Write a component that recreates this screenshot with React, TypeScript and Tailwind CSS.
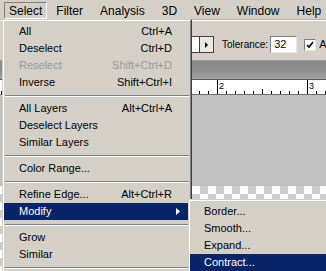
import type { ReactNode } from "react";

type Entry =
	| {
			label: string;
			shortcut?: string;
			disabled?: boolean;
			active?: boolean;
			submenu?: boolean;
	  }
	| "sep";

const selectMenu: Entry[] = [
	{ label: "All", shortcut: "Ctrl+A" },
	{ label: "Deselect", shortcut: "Ctrl+D" },
	{ label: "Reselect", shortcut: "Shift+Ctrl+D", disabled: true },
	{ label: "Inverse", shortcut: "Shift+Ctrl+I" },
	"sep",
	{ label: "All Layers", shortcut: "Alt+Ctrl+A" },
	{ label: "Deselect Layers" },
	{ label: "Similar Layers" },
	"sep",
	{ label: "Color Range..." },
	"sep",
	{ label: "Refine Edge...", shortcut: "Alt+Ctrl+R" },
	{ label: "Modify", active: true, submenu: true },
	"sep",
	{ label: "Grow" },
	{ label: "Similar" },
	"sep",
];

const modifyMenu: Entry[] = [
	{ label: "Border..." },
	{ label: "Smooth..." },
	{ label: "Expand..." },
	{ label: "Contract...", active: true },
];

const menuBar = ["Select", "Filter", "Analysis", "3D", "View", "Window", "Help"];

function MenuFrame({ className, children }: { className: string; children: ReactNode }) {
	// classic windows 3d frame: light outer/white inner top-left, dark outer/gray inner bottom-right
	return (
		<div
			className={`absolute border border-t-[#d4d0c8] border-l-[#d4d0c8] border-r-[#404040] border-b-[#404040] bg-[#d4d0c8] ${className}`}
		>
			<div className="border border-t-white border-l-white border-r-[#808080] border-b-[#808080] pt-[2px]">
				{children}
			</div>
		</div>
	);
}

function MenuRow({ entry, padLeft }: { entry: Entry; padLeft: string }) {
	if (entry === "sep") {
		return (
			<div className="h-[9px] flex flex-col justify-center px-[1px]">
				<div className="h-px bg-[#808080]" />
				<div className="h-px bg-white" />
			</div>
		);
	}
	const color = entry.active
		? "bg-[#0a246a] text-white"
		: entry.disabled
			? "text-[#9a9894]"
			: "text-black";
	return (
		<div className={`h-[17px] flex items-center ${padLeft} pr-[18px] ${color}`}>
			<span className="flex-1 whitespace-nowrap">{entry.label}</span>
			{entry.shortcut && <span className="whitespace-nowrap">{entry.shortcut}</span>}
			{entry.submenu && (
				<svg width="4" height="7" viewBox="0 0 4 7" className="mr-[-8px]">
					<polygon points="0,0 4,3.5 0,7" fill="currentColor" />
				</svg>
			)}
		</div>
	);
}

function Ruler() {
	const ticks = [];
	for (let k = -24; k <= 12; k++) {
		const x = 217 + k * 9;
		if (k % 10 === 0) continue;
		const h = k % 5 === 0 ? 5 : 3;
		ticks.push(<line key={k} x1={x + 0.5} x2={x + 0.5} y1={14 - h} y2={14} stroke="#000" />);
	}
	return (
		<div className="h-[15px] bg-white border-b border-[#6e6e6e]">
			<svg width="326" height="14" className="block">
				{ticks}
				<line x1="217.5" x2="217.5" y1="0" y2="14" stroke="#000" />
				<line x1="307.5" x2="307.5" y1="0" y2="14" stroke="#000" />
				<text x="219" y="9" fontSize="9" fontFamily="Liberation Sans, sans-serif">
					2
				</text>
				<text x="309" y="9" fontSize="9" fontFamily="Liberation Sans, sans-serif">
					3
				</text>
			</svg>
		</div>
	);
}

export default function App() {
	return (
		<div className="relative w-[326px] h-[271px] overflow-hidden bg-[#d4d0c8] font-['Liberation_Sans',Arial,sans-serif] flex flex-col">
			{/* Menu bar */}
			<div className="h-[20px] flex items-start pt-[2px] pl-[4px] text-[12px] text-black border-b border-[#b8b4ac]">
				{menuBar.map((name, i) =>
					i === 0 ? (
						<div
							key={name}
							className="h-[17px] px-[4px] flex items-center border border-t-[#808080] border-l-[#808080] border-r-white border-b-white"
						>
							{name}
						</div>
					) : (
						<div key={name} className="h-[17px] px-[8px] ml-[1px] flex items-center whitespace-nowrap">
							{name}
						</div>
					),
				)}
			</div>

			{/* Options bar */}
			<div className="h-[40px] flex items-center pt-[8px] pl-[150px] text-[10px] text-black border-t border-white">
				<div className="shrink-0 h-[17px] w-[50px] bg-white border border-[#404040]" />
				<div className="shrink-0 h-[17px] w-[14px] border border-l-0 border-[#404040] bg-[#ece9e2] flex items-center justify-center">
					<svg width="3" height="6" viewBox="0 0 3 6">
						<polygon points="0,0 3,3 0,6" fill="#000" />
					</svg>
				</div>
				<span className="shrink-0 ml-[8px] whitespace-nowrap">Tolerance:</span>
				<div className="shrink-0 ml-[2px] h-[17px] w-[27px] bg-white border border-t-[#808080] border-l-[#808080] border-r-[#e8e6e0] border-b-[#e8e6e0] flex items-center pl-[3px] text-[11px]">
					32
				</div>
				<div className="shrink-0 ml-[7px] w-[12px] h-[12px] bg-white border border-t-[#808080] border-l-[#808080] border-r-[#e8e6e0] border-b-[#e8e6e0] flex items-center justify-center">
					<svg width="8" height="8" viewBox="0 0 8 8">
						<polyline points="1,4 3,6 7,1" fill="none" stroke="#000" strokeWidth="1.6" />
					</svg>
				</div>
				<span className="shrink-0 ml-[3px] whitespace-nowrap text-[11px]">Anti-alias</span>
			</div>

			{/* Document title bar */}
			<div className="h-[20px] bg-gradient-to-b from-[#8a8a8a] via-[#8c8c8c] to-[#a3a3a3] border-t border-[#9c9c9c] border-b border-b-[#5a5a5a]" />

			<Ruler />

			{/* Canvas */}
			<div className="h-[91px] bg-[#c0c0c0]" />
			<div className="flex-1 bg-[conic-gradient(#cccccc_25%,#ffffff_0_50%,#cccccc_0_75%,#ffffff_0)] bg-size-[16px_16px] bg-[position:0_0]" />

			{/* Select menu */}
			<MenuFrame className="left-[2px] top-[19px] w-[190px] text-[11px]">
				{selectMenu.map((e, i) => (
					<MenuRow key={i} entry={e} padLeft="pl-[15px]" />
				))}
			</MenuFrame>

			{/* Modify submenu */}
			<MenuFrame className="left-[188px] top-[199px] w-[150px] text-[11px]">
				{modifyMenu.map((e, i) => (
					<MenuRow key={i} entry={e} padLeft="pl-[14px]" />
				))}
			</MenuFrame>
		</div>
	);
}
